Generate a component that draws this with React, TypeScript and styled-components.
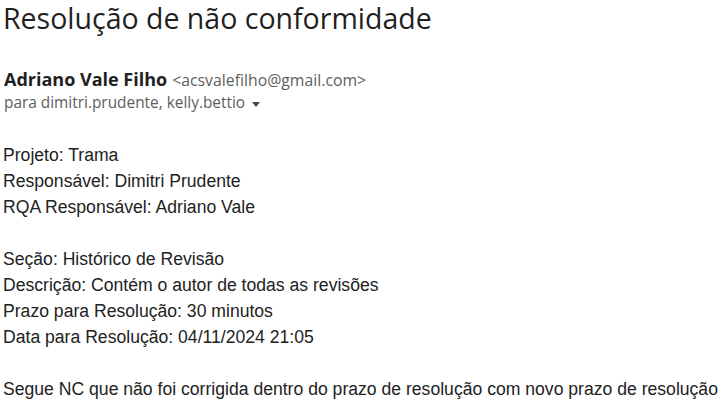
import styled, { createGlobalStyle } from 'styled-components'

const GlobalStyle = createGlobalStyle`
    html, body {
        margin: 0;
        padding: 0;
        background: #ffffff;
    }
`

const Page = styled.div`
    padding: 0 0 0 3px;
    width: 727px;
    height: 410px;
    overflow: hidden;
    box-sizing: border-box;
`

const Subject = styled.h1`
    margin: 0;
    font-family: 'Open Sans', sans-serif;
    font-weight: 400;
    font-size: 28.5px;
    line-height: 36px;
    color: #1f1f1f;
`

const Header = styled.div`
    margin-top: 32px;
    padding-left: 1px;
    font-family: 'Open Sans', sans-serif;
`

const SenderRow = styled.div`
    display: flex;
    align-items: baseline;
    gap: 5px;
    height: 22px;
    line-height: 22px;
`

const SenderName = styled.span`
    font-size: 18px;
    font-weight: 700;
    color: #1f1f1f;
`

const SenderEmail = styled.span`
    font-size: 15.8px;
    color: #5e5e5e;
`

const Recipients = styled.div`
    display: flex;
    align-items: center;
    margin-top: 3px;
    height: 20px;
    font-size: 15.4px;
    line-height: 20px;
    color: #5e5e5e;
`

const Caret = styled.span`
    width: 0;
    height: 0;
    border-left: 4px solid transparent;
    border-right: 4px solid transparent;
    border-top: 5px solid #444746;
    margin-left: 7px;
    margin-top: 2px;
`

const Body = styled.div`
    margin-top: 29px;
    font-family: 'Liberation Sans', Arial, sans-serif;
    font-size: 17.6px;
    line-height: 26px;
    color: #222222;
`

const Line = styled.div`
    height: 26px;
    white-space: nowrap;
`

const lines = [
    'Projeto: Trama',
    'Responsável: Dimitri Prudente',
    'RQA Responsável: Adriano Vale',
    '',
    'Seção: Histórico de Revisão',
    'Descrição: Contém o autor de todas as revisões',
    'Prazo para Resolução: 30 minutos',
    'Data para Resolução: 04/11/2024 21:05',
    '',
    'Segue NC que não foi corrigida dentro do prazo de resolução com novo prazo de resolução',
]

export default function App() {
    return (
        <>
            <GlobalStyle />
            <Page>
                <Subject>Resolução de não conformidade</Subject>
                <Header>
                    <SenderRow>
                        <SenderName>Adriano Vale Filho</SenderName>
                        <SenderEmail>&lt;acsvalefilho@gmail.com&gt;</SenderEmail>
                    </SenderRow>
                    <Recipients>
                        para dimitri.prudente, kelly.bettio
                        <Caret />
                    </Recipients>
                </Header>
                <Body>
                    {lines.map((text, index) => (
                        <Line key={index}>{text}</Line>
                    ))}
                </Body>
            </Page>
        </>
    )
}
